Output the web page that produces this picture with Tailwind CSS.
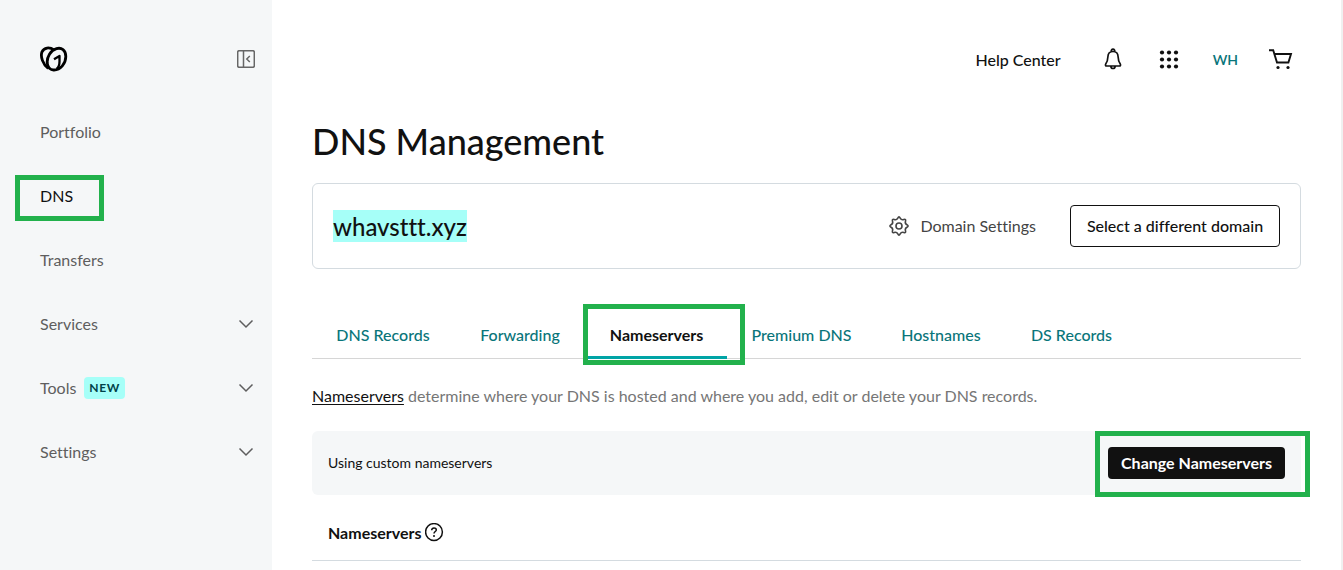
<!DOCTYPE html>
<html lang="en">
<head>
<meta charset="utf-8">
<meta name="viewport" content="width=device-width, initial-scale=1">
<title>DNS Management</title>
<script src="https://cdn.jsdelivr.net/npm/@tailwindcss/browser@4"></script>
</head>
<body class="flex min-h-screen overflow-x-hidden border-r-2 border-[#f0f0f0] bg-white font-['Lato','Noto_Sans',sans-serif] text-base text-[#111] [font-variant-ligatures:none]">

<aside class="w-[272px] shrink-0 bg-[#f5f7f8] pt-[43px]">
  <div class="flex h-8 items-center justify-between pl-10 pr-4">
    <a href="#" aria-label="Home">
      <svg class="h-[26px] w-7" viewBox="0 -1 28 26" fill="none" stroke="#000" stroke-width="2.800" stroke-linejoin="round">
        <path d="M14 23C20.500 22.800 25.800 16.500 25.800 9.500C25.800 3 21.500 .2 16.500 1.600C10.500 3.400 6.800 10 7.200 16C7.700 20.500 10.500 23.200 14 23Z"/>
        <path d="M14 3C9.500 -.2 4 .4 2 4.800C.2 9.500 2.800 17.500 8.200 21.300"/>
        <path d="M14 12.300L19.500 8.900V14.500C19.500 18.500 18.500 20.500 16.500 22" stroke-width="2.300"/>
      </svg>
    </a>
    <button type="button" aria-label="Collapse menu" class="mr-px text-[#666]">
      <svg class="h-[18px] w-[18px]" viewBox="0 0 18 18" fill="none" stroke="currentColor" stroke-width="1.500">
        <rect x=".7" y=".7" width="16.600" height="16.600" rx="1.500"/><path d="M6.500 1v16M12.800 6L9.800 9l3 3"/>
      </svg>
    </button>
  </div>
  <nav class="mt-[25px] text-[#5e5e5e]">
    <a href="#" class="flex h-16 items-center px-10">Portfolio</a>
    <a href="#" class="relative flex h-16 items-center px-10 text-[#111]">DNS
      <span class="absolute left-[15px] top-[11px] h-[46px] w-[89px] border-5 border-[#22b14c]"></span>
    </a>
    <a href="#" class="flex h-16 items-center px-10">Transfers</a>
    <button type="button" class="flex h-16 w-full items-center justify-between pl-10 pr-[18px]">Services
      <svg class="h-4 w-4" viewBox="0 0 16 16" fill="none" stroke="currentColor" stroke-width="1.500"><path d="M1.500 4.500L8 11l6.500-6.500"/></svg>
    </button>
    <button type="button" class="flex h-16 w-full items-center justify-between pl-10 pr-[18px]">
      <span class="flex items-center gap-2">Tools <span class="rounded bg-[#a6fff8] px-[5px] text-xs leading-[22px] font-bold tracking-wider text-[#004249]">NEW</span></span>
      <svg class="h-4 w-4" viewBox="0 0 16 16" fill="none" stroke="currentColor" stroke-width="1.500"><path d="M1.500 4.500L8 11l6.500-6.500"/></svg>
    </button>
    <button type="button" class="flex h-16 w-full items-center justify-between pl-10 pr-[18px]">Settings
      <svg class="h-4 w-4" viewBox="0 0 16 16" fill="none" stroke="currentColor" stroke-width="1.500"><path d="M1.500 4.500L8 11l6.500-6.500"/></svg>
    </button>
  </nav>
</aside>

<main class="min-w-0 grow pl-10 pr-10 pt-11">
  <header class="flex h-8 items-center justify-end pr-2">
    <a href="#" class="font-medium">Help Center</a>
    <button type="button" aria-label="Notifications" class="ml-10">
      <svg class="h-6 w-6" viewBox="0 0 24 24" fill="none" stroke="#111" stroke-width="1.700" stroke-linejoin="round">
        <path d="M10.300 3.600a1.800 1.800 0 1 1 3.400 0M12 3.500c-3.200 0-5 2.300-5.100 5.300-.1 3.600-.7 5.200-2.200 7.300-.5.800-.2 1.900.9 1.900h12.800c1.100 0 1.400-1.100.9-1.900-1.500-2.100-2.100-3.700-2.200-7.300-.1-3-1.900-5.300-5.100-5.300ZM9.800 18.300c.2 1.500 1.100 2.200 2.200 2.200s2-.7 2.200-2.200"/>
      </svg>
    </button>
    <button type="button" aria-label="Apps" class="ml-8">
      <svg class="h-6 w-6" viewBox="0 0 24 24" fill="#111">
        <circle cx="5" cy="4.500" r="2.100"/><circle cx="12" cy="4.500" r="2.100"/><circle cx="19" cy="4.500" r="2.100"/>
        <circle cx="5" cy="11.500" r="2.100"/><circle cx="12" cy="11.500" r="2.100"/><circle cx="19" cy="11.500" r="2.100"/>
        <circle cx="5" cy="18.500" r="2.100"/><circle cx="12" cy="18.500" r="2.100"/><circle cx="19" cy="18.500" r="2.100"/>
      </svg>
    </button>
    <a href="#" class="ml-8 text-sm font-semibold text-[#09757a]">WH</a>
    <button type="button" aria-label="Cart" class="ml-[31px]">
      <svg class="h-6 w-6" viewBox="0 0 24 24" fill="none" stroke="#111" stroke-width="1.900">
        <path d="M0 2.200h4.200l3.800 12.300h11.400l2.600-8.500H5.400"/><circle cx="9" cy="19.500" r="1.600" fill="#111" stroke="none"/><circle cx="19" cy="19.500" r="1.600" fill="#111" stroke="none"/>
      </svg>
    </button>
  </header>

  <h1 class="mt-[43px] text-4xl leading-[44px] font-medium">DNS Management</h1>

  <section class="mt-5 flex h-[86px] items-center rounded-md border border-[#d4dbe0] px-5">
    <h2 class="bg-[#a6fff8] pt-[2px] text-2xl leading-[30px] font-medium">whavsttt.xyz</h2>
    <a href="#" class="ml-auto flex items-center gap-[11px] text-[#444]">
      <svg class="h-5 w-5" viewBox="0 0 20 20" fill="none" stroke="currentColor" stroke-width="1.600" stroke-linejoin="round">
        <path d="M11.190 2.040Q12.370 4.270 14.790 3.530Q17.210 2.790 16.470 5.210Q15.730 7.630 17.960 8.810Q20.200 10 17.960 11.190Q15.730 12.370 16.470 14.790Q17.210 17.210 14.790 16.470Q12.370 15.730 11.190 17.960Q10 20.200 8.810 17.960Q7.630 15.730 5.210 16.470Q2.790 17.210 3.530 14.790Q4.270 12.370 2.040 11.190Q-.2 10 2.040 8.810Q4.270 7.630 3.530 5.210Q2.790 2.790 5.210 3.530Q7.630 4.270 8.810 2.040Q10 -.2 11.190 2.040Z"/>
        <circle cx="10" cy="10" r="3"/>
      </svg>
      Domain Settings
    </a>
    <button type="button" class="ml-[34px] h-[42px] w-[210px] rounded border border-[#111] font-medium whitespace-nowrap">Select a different domain</button>
  </section>

  <nav class="mt-[43px] flex h-[47px] border-b border-[#d6d6d6] pb-px text-[#09757a] font-medium whitespace-nowrap">
    <a href="#" class="flex w-[142px] items-center justify-center">DNS Records</a>
    <a href="#" class="flex w-[132px] items-center justify-center">Forwarding</a>
    <a href="#" aria-current="page" class="relative flex w-[141px] items-center justify-center font-bold text-[#111]">Nameservers
      <span class="absolute -bottom-[2px] left-0 h-[3px] w-full bg-[#00a4a6]"></span>
      <span class="absolute -left-[3px] -top-[8px] h-[61px] w-[162px] border-5 border-[#22b14c]"></span>
    </a>
    <a href="#" class="flex w-[149px] items-center justify-center">Premium DNS</a>
    <a href="#" class="flex w-[130px] items-center justify-center">Hostnames</a>
    <a href="#" class="flex w-[131px] items-center justify-center">DS Records</a>
  </nav>

  <p class="mt-[25px] leading-6 text-[#767676]"><a href="#" class="text-[#111] underline underline-offset-2">Nameservers</a> determine where your DNS is hosted and where you add, edit or delete your DNS records.</p>

  <section class="relative mt-[23px] flex h-16 items-center justify-between rounded-md bg-[#f5f7f8] px-4">
    <span class="text-sm">Using custom nameservers</span>
    <button type="button" class="h-8 w-[177px] rounded bg-[#111] font-bold whitespace-nowrap text-white">Change Nameservers</button>
    <span class="pointer-events-none absolute -right-[9px] top-0 h-[66px] w-[215px] border-5 border-[#22b14c]"></span>
  </section>

  <section class="flex h-[66px] items-center gap-1 border-b border-[#d4dbe0] px-4 pt-[10px]">
    <h3 class="font-bold">Nameservers</h3>
    <button type="button" aria-label="Help">
      <svg class="h-5 w-5" viewBox="0 1 20 20" fill="none" stroke="#111" stroke-width="1.500"><circle cx="9" cy="10" r="8.400"/><path d="M6.700 8.200C6.700 6.700 7.700 5.900 9 5.900s2.300.8 2.300 2c0 1.500-2.300 1.700-2.300 3.600"/><circle cx="9" cy="13.900" r="1" fill="#111" stroke="none"/></svg>
    </button>
  </section>
</main>
</body>
</html>
